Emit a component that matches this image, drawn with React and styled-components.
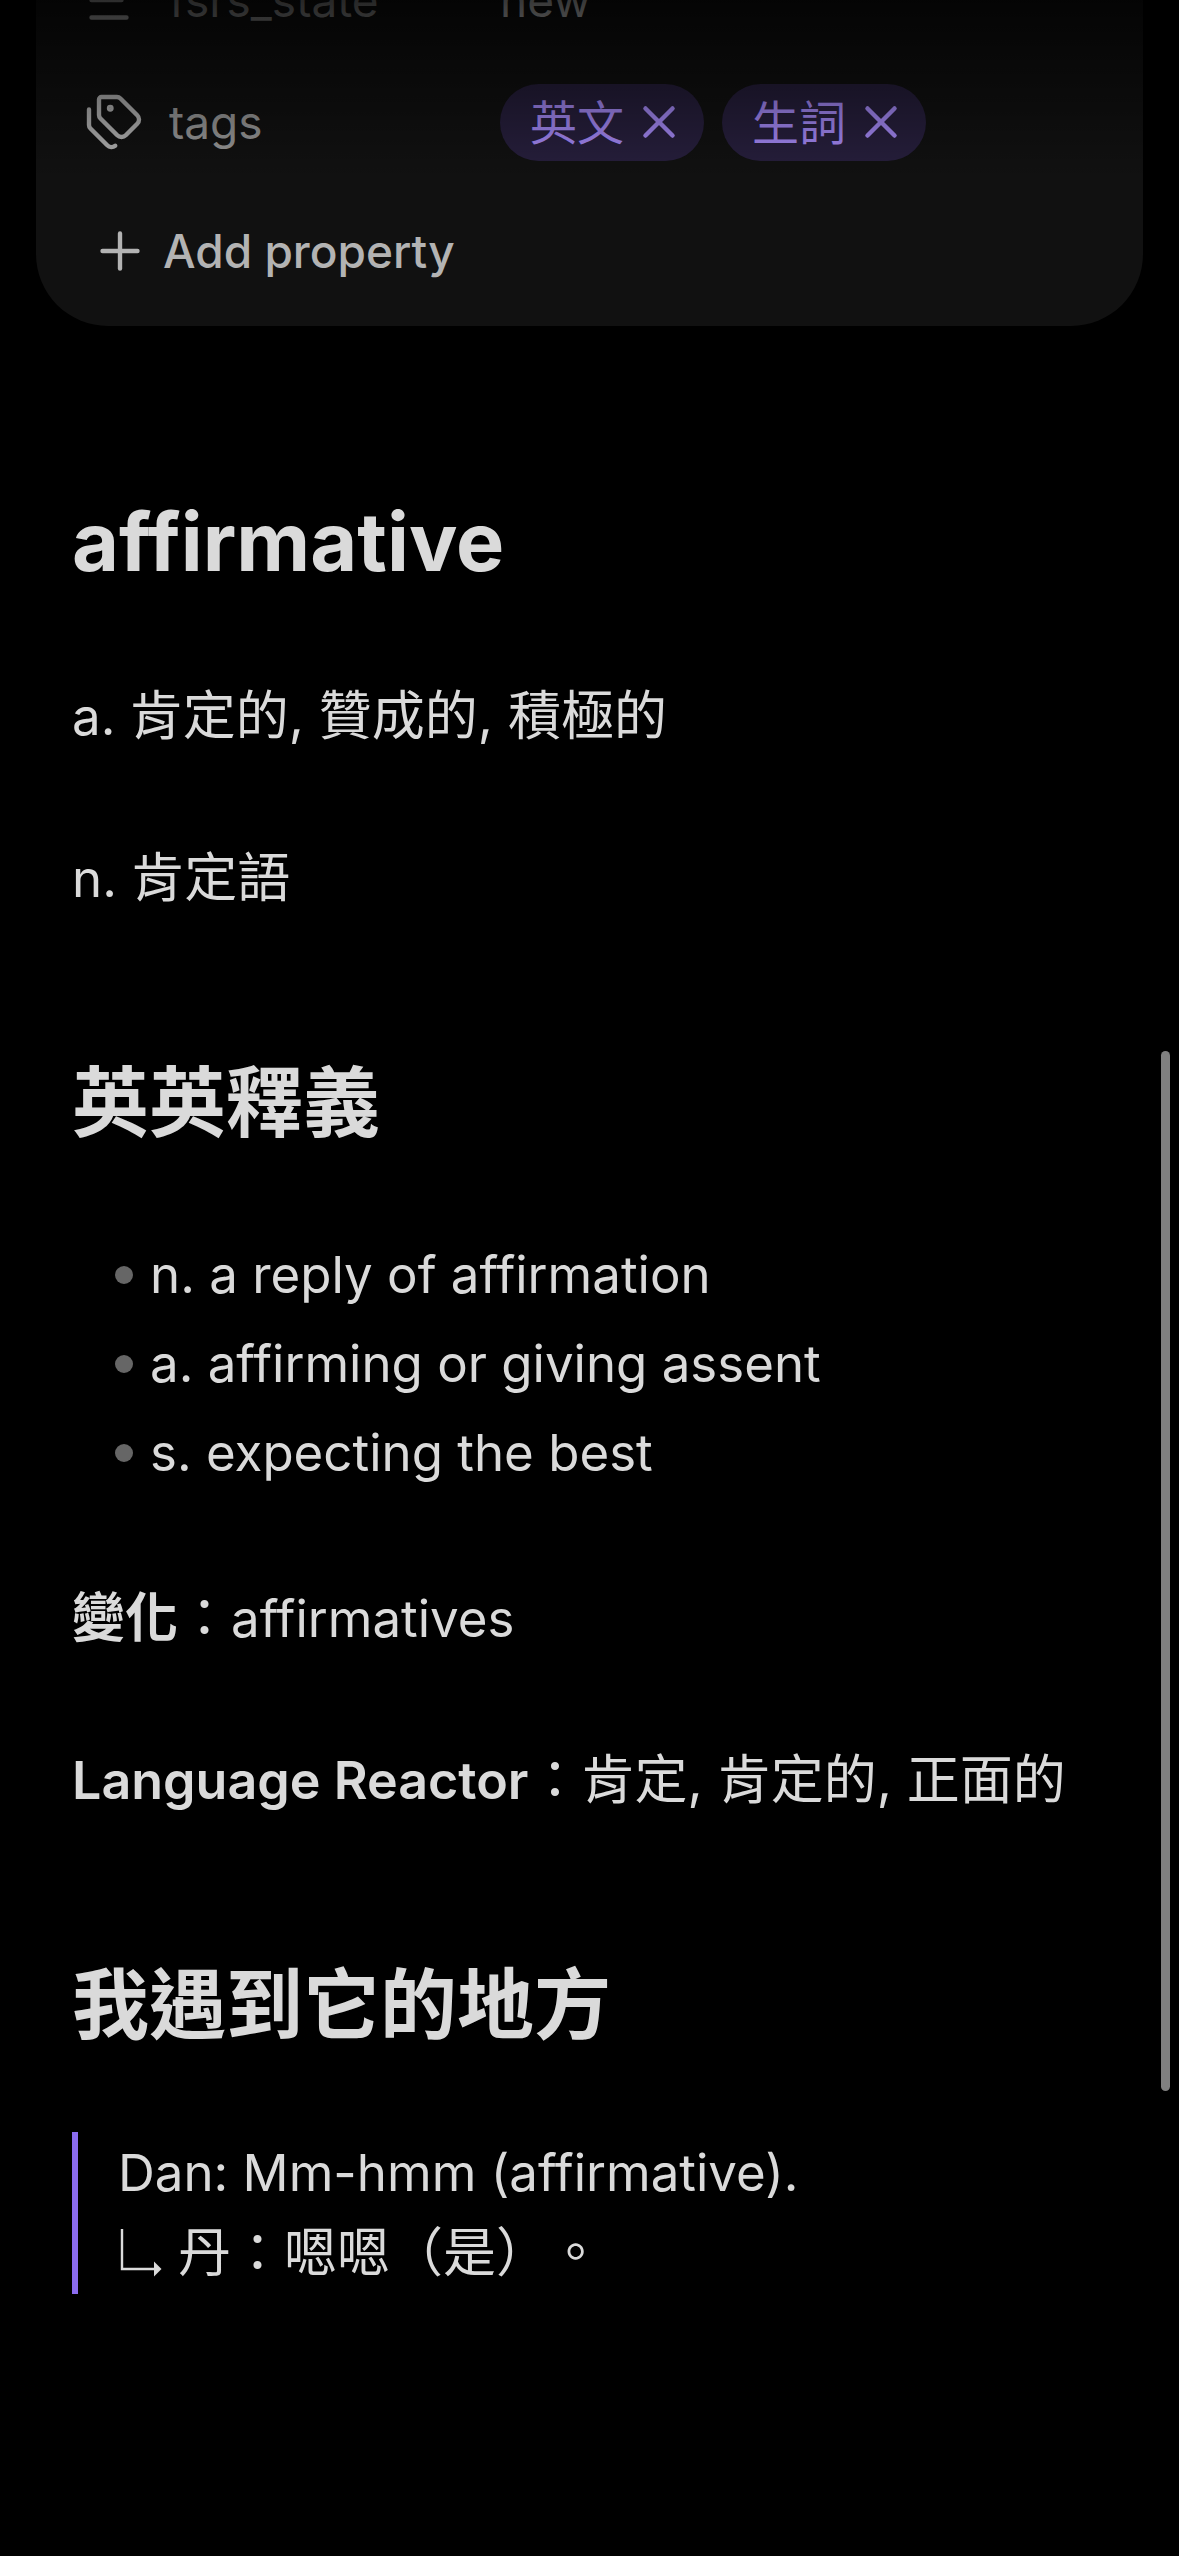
import React from "react";
import styled, { createGlobalStyle } from "styled-components";
import { Plus, Tags, X } from "lucide-react";

const GlobalStyle = createGlobalStyle`
  * {
    box-sizing: border-box;
  }
  html {
    background: #000;
    scrollbar-width: none;
  }
  body {
    margin: 0;
    background: #000;
    color: #dadada;
    font-family: Inter, "Noto Sans CJK TC", sans-serif;
    font-size: 51px;
    line-height: 81px;
    text-spacing-trim: space-all;
  }
`;

const Page = styled.div`
  min-height: 100vh;
  overflow: hidden;
`;

const Properties = styled.section`
  margin: 0 36px;
  padding: 0 32px 7px 48px;
  border-radius: 0 0 72px 72px;
  background: #111;
  color: #b3b3b3;
  font-size: 46px;
`;

const Property = styled.div`
  display: grid;
  grid-template-columns: 60px 306px 1fr;
  column-gap: 25px;
  align-items: center;
  height: 122px;
  margin-top: ${(props) => (props.$clipped ? "-61px" : "0")};
`;

const PropertyName = styled.span`
  color: #999;
`;

const PropertyValue = styled.div`
  display: flex;
  gap: 18px;
  color: #dadada;
`;

const Tag = styled.span`
  display: flex;
  align-items: center;
  gap: 8px;
  height: 77px;
  padding: 0 18px 0 30px;
  border-radius: 39px;
  background: #271f3d;
  color: #a68af9;
  font-size: 47px;
`;

const TagRemove = styled.button`
  display: flex;
  padding: 0;
  border: none;
  background: none;
  color: inherit;
`;

const AddProperty = styled.button`
  display: flex;
  align-items: center;
  gap: 13px;
  height: 136px;
  padding: 0 6px;
  border: none;
  background: none;
  color: #b3b3b3;
  font: inherit;
  font-weight: 500;
`;

const StatusFade = styled.div`
  position: absolute;
  top: 0;
  left: 0;
  right: 0;
  height: 180px;
  background: linear-gradient(rgba(0, 0, 0, 0.75), rgba(0, 0, 0, 0));
  pointer-events: none;
`;

const ScrollThumb = styled.div`
  position: absolute;
  top: 1051px;
  right: 9px;
  width: 9px;
  height: 1040px;
  border-radius: 5px;
  background: #808080;
`;

const Note = styled.article`
  padding: 162px 72px;
`;

const Title = styled.h1`
  margin: 0 0 80px;
  font-size: 81px;
  line-height: 108px;
  font-weight: 700;
`;

const Heading = styled.h2`
  margin: 130px 0 73px;
  font-size: 77px;
  line-height: 108px;
  font-weight: 700;
`;

const Paragraph = styled.p`
  margin: 0 0 81px;
`;

const Strong = styled.strong`
  font-size: 52px;
  font-weight: 600;
`;

// Chinese runs are set slightly larger than the Latin text beside them
const Han = styled.span`
  font-size: 53px;
`;

const List = styled.ul`
  margin: 0 0 81px;
  padding: 0;
  list-style: none;
`;

const ListItem = styled.li`
  display: flex;
  align-items: center;
  gap: 17px;
  padding: 4px 0 4px 43px;

  &::before {
    content: "";
    width: 18px;
    height: 18px;
    border-radius: 50%;
    background: #666;
  }
`;

const Quote = styled.blockquote`
  margin: 0;
  padding-left: 40px;
  border-left: 6px solid #8b6cef;
`;

const QuoteLine = styled.div`
  display: flex;
  align-items: center;
  gap: 16px;
`;

const TextIcon = () => (
  <svg width="60" height="60" viewBox="0 0 24 24" fill="none" stroke="currentColor" strokeWidth="1.75" strokeLinecap="round">
    <path d="M21 5H3M15 12H3M17 19H3" />
  </svg>
);

const ReplyArrow = () => (
  <svg width="44" height="50" viewBox="0 0 44 50" fill="none">
    <path d="M4 0V40H37" stroke="currentColor" strokeWidth="2.4" />
    <path d="M36 32.5L43.5 40L36 47.5Z" fill="currentColor" />
  </svg>
);

const tags = ["英文", "生詞"];

const definitions = [
  "n. a reply of affirmation",
  "a. affirming or giving assent",
  "s. expecting the best",
];

const App = () => {
  return (
    <Page>
      <GlobalStyle />
      <Properties>
        <Property $clipped>
          <TextIcon />
          <PropertyName>fsrs_state</PropertyName>
          <PropertyValue>new</PropertyValue>
        </Property>
        <Property>
          <Tags size={60} strokeWidth={1.75} />
          <PropertyName>tags</PropertyName>
          <PropertyValue>
            {tags.map((tag) => (
              <Tag key={tag}>
                {tag}
                <TagRemove aria-label={`Remove ${tag}`}>
                  <X size={54} strokeWidth={2} />
                </TagRemove>
              </Tag>
            ))}
          </PropertyValue>
        </Property>
        <AddProperty>
          <Plus size={60} strokeWidth={1.75} />
          Add property
        </AddProperty>
      </Properties>
      <Note>
        <Title>affirmative</Title>
        <Paragraph>
          a. <Han>肯定的, 贊成的, 積極的</Han>
        </Paragraph>
        <Paragraph>
          n. <Han>肯定語</Han>
        </Paragraph>
        <Heading>英英釋義</Heading>
        <List>
          {definitions.map((definition) => (
            <ListItem key={definition}>{definition}</ListItem>
          ))}
        </List>
        <Paragraph>
          <Strong>
            <Han>變化</Han>
          </Strong>
          <Han>：</Han>affirmatives
        </Paragraph>
        <Paragraph>
          <Strong>Language Reactor</Strong>
          <Han>：肯定, 肯定的, 正面的</Han>
        </Paragraph>
        <Heading>我遇到它的地方</Heading>
        <Quote>
          <QuoteLine>Dan: Mm-hmm (affirmative).</QuoteLine>
          <QuoteLine>
            <ReplyArrow />
            <Han>丹：嗯嗯（是）。</Han>
          </QuoteLine>
        </Quote>
      </Note>
      <StatusFade />
      <ScrollThumb />
    </Page>
  );
};

export default App;
